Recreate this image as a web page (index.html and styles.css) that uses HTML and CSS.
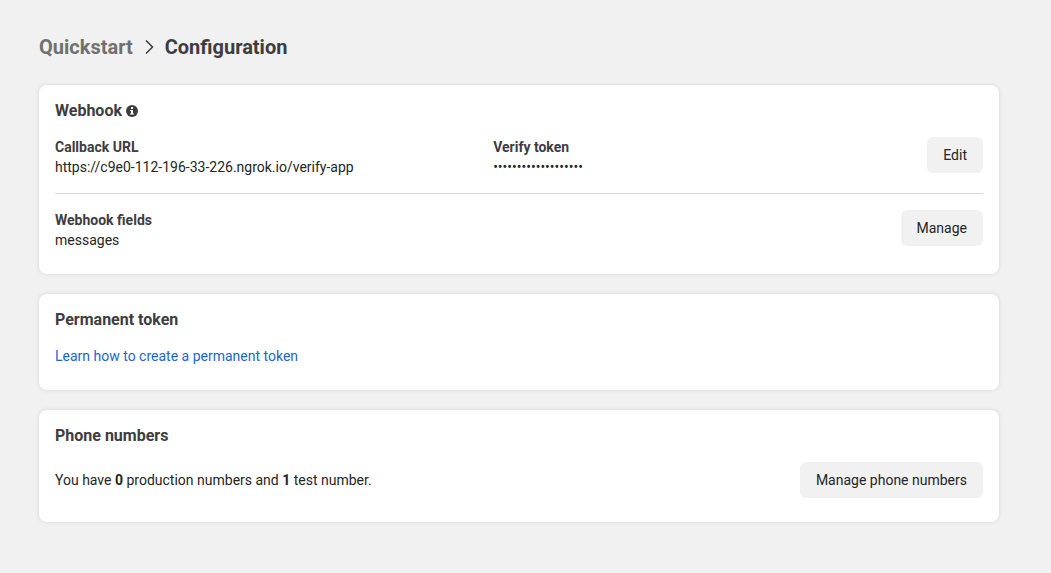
FILE: index.html
```html
<!DOCTYPE html>
<html lang="en">
<head>
<meta charset="utf-8">
<title>Configuration</title>
<link rel="stylesheet" href="styles.css">
</head>
<body>
<main class="page">
  <h1 class="breadcrumb">
    <a class="breadcrumb-link" href="#">Quickstart</a>
    <svg class="breadcrumb-icon" viewBox="0 0 16 16" aria-hidden="true"><path d="M5 1.500L11.500 8L5 14.500"/></svg>
    <span>Configuration</span>
  </h1>

  <section class="card">
    <h2 class="card-title">Webhook
      <svg class="info-icon" viewBox="0 0 12 12" aria-hidden="true"><circle cx="6" cy="6" r="6"/><path d="M5 2h2v2H5zM4 5h3v3.500h1v1H4v-1h1V6H4z"/></svg>
    </h2>
    <div class="row row-divided">
      <div class="fields">
        <div>
          <h3 class="label">Callback URL</h3>
          <p class="value">https://c9e0-112-196-33-226.ngrok.io/verify-app</p>
        </div>
        <div>
          <h3 class="label">Verify token</h3>
          <p class="value">•••••••••••••••••••</p>
        </div>
      </div>
      <button class="button" type="button">Edit</button>
    </div>
    <div class="row">
      <div>
        <h3 class="label">Webhook fields</h3>
        <p class="value">messages</p>
      </div>
      <button class="button" type="button">Manage</button>
    </div>
  </section>

  <section class="card">
    <h2 class="card-title">Permanent token</h2>
    <p class="card-text"><a class="link" href="#">Learn how to create a permanent token</a></p>
  </section>

  <section class="card">
    <h2 class="card-title">Phone numbers</h2>
    <div class="row row-center">
      <p class="value">You have <b>0</b> production numbers and <b>1</b> test number.</p>
      <button class="button" type="button">Manage phone numbers</button>
    </div>
  </section>
</main>
</body>
</html>
```
FILE: styles.css
```css
* { box-sizing: border-box; }
body {
  margin: 0;
  background: #f1f1f1;
  color: #252525;
  font-family: Roboto, sans-serif;
  font-size: 14px;
  line-height: 20px;
}
h1, h2, h3, p { margin: 0; }
.page {
  display: flex;
  flex-direction: column;
  gap: 20px;
  padding: 35px 52px 50px 39px;
}
.breadcrumb {
  display: flex;
  align-items: center;
  gap: 8px;
  margin-bottom: 6px;
  font-size: 20px;
  line-height: 24px;
  color: #3d3d3f;
}
.breadcrumb-link { color: #707070; text-decoration: none; }
.breadcrumb-icon {
  width: 16px;
  height: 16px;
  fill: none;
  stroke: #3d3d3f;
  stroke-width: 1.5;
}
.card {
  padding: 16px 16px 24px;
  border-radius: 8px;
  background: #fff;
  box-shadow: 0 0 4px rgba(0, 0, 0, 0.12);
}
.card-title {
  display: flex;
  align-items: center;
  gap: 4px;
  font-size: 16px;
  line-height: 20px;
  color: #3d3d3f;
}
.info-icon { width: 12px; height: 12px; fill: #3d3d3f; }
.info-icon path { fill: #fff; }
.row {
  display: flex;
  align-items: flex-start;
  justify-content: space-between;
  margin-top: 16px;
}
.row-divided { padding-bottom: 16px; border-bottom: 1px solid #d9d9d9; }
.row-center { align-items: center; }
.fields {
  display: grid;
  flex: 1;
  grid-template-columns: 1fr 1fr;
  gap: 4px;
}
.label { font-size: 14px; line-height: 20px; color: #3d3d3f; }
.card-text { margin-top: 16px; }
.link { color: #1b66d2; text-decoration: none; }
.button {
  height: 36px;
  padding: 0 16px;
  border: 0;
  border-radius: 6px;
  background: #f1f1f1;
  color: #252525;
  font: inherit;
}
```
